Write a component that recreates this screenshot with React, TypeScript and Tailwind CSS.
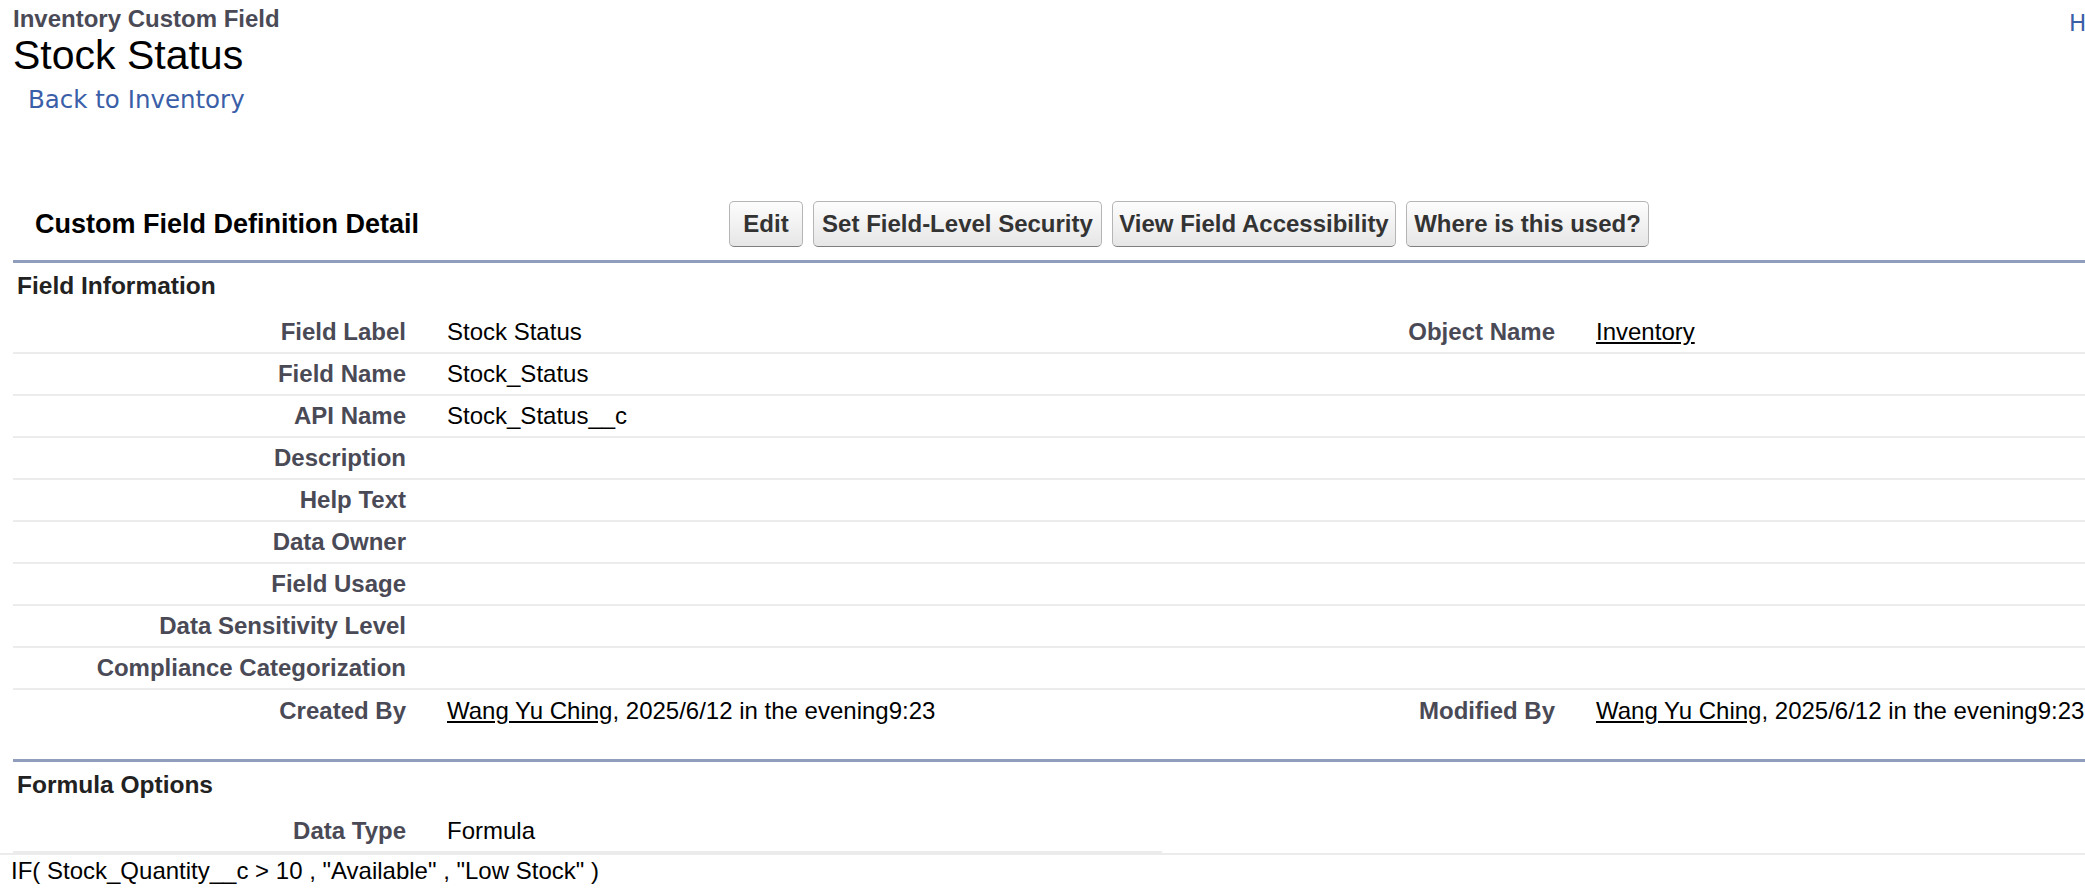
import React from 'react';

const sans = "font-['Liberation_Sans',Arial,sans-serif]";

type Cell = { label?: string; value?: React.ReactNode };

const Modified = () => (
  <>
    <span className="underline">Wang Yu Ching</span>, 2025/6/12 in the evening9:23
  </>
);

const rows: [Cell, Cell][] = [
  [{ label: 'Field Label', value: 'Stock Status' }, { label: 'Object Name', value: <span className="underline">Inventory</span> }],
  [{ label: 'Field Name', value: 'Stock_Status' }, {}],
  [{ label: 'API Name', value: 'Stock_Status__c' }, {}],
  [{ label: 'Description' }, {}],
  [{ label: 'Help Text' }, {}],
  [{ label: 'Data Owner' }, {}],
  [{ label: 'Field Usage' }, {}],
  [{ label: 'Data Sensitivity Level' }, {}],
  [{ label: 'Compliance Categorization' }, {}],
  [{ label: 'Created By', value: <Modified /> }, { label: 'Modified By', value: <Modified /> }],
];

const buttons = [
  { text: 'Edit', w: 'w-[74px]' },
  { text: 'Set Field-Level Security', w: 'w-[289px]' },
  { text: 'View Field Accessibility', w: 'w-[284px]' },
  { text: 'Where is this used?', w: 'w-[243px]' },
];

const LabelCell = ({ text }: { text?: string }) => (
  <div className="pr-[21px] text-right font-bold text-[#4a4a56] whitespace-nowrap">{text}</div>
);

const ValueCell = ({ children }: { children?: React.ReactNode }) => (
  <div className="pl-[20px] text-black whitespace-nowrap overflow-visible">{children}</div>
);

const SectionHeader = ({ title }: { title: string }) => (
  <>
    <div className="h-[3px] bg-[#919dbd]" />
    <h3 className="mt-[9px] pl-[4px] text-[24.5px] leading-[28px] font-bold text-[#222]">{title}</h3>
  </>
);

export default function App() {
  return (
    <div className={`w-full h-[890px] overflow-hidden bg-white ${sans}`}>
      <div className="w-[2400px] pl-[13px] pt-[5px]">
        {/* page title */}
        <div className="flex">
          <div className="w-[2056px] shrink-0">
            <div className="text-[24px] leading-[28px] font-bold text-[#4a4a56]">Inventory Custom Field</div>
            <h1 className="text-[41px] leading-[44px] text-black">Stock Status</h1>
            <div className="mt-[8px] ml-[15px] font-['DejaVu_Sans',Verdana,sans-serif] text-[24.5px] leading-[30px] text-[#3a5ea8]">
              Back to Inventory
            </div>
          </div>
          <div className="mt-[4px] shrink-0 whitespace-nowrap font-['DejaVu_Sans',Verdana,sans-serif] text-[23px] leading-[28px] text-[#3a5ea8]">
            Help for this Page
          </div>
        </div>

        {/* detail block */}
        <div className="mt-[86px] w-[2298px]">
          <div className="flex h-[46px] items-center">
            <div className="w-[716px] shrink-0 pl-[22px] text-[27px] font-bold text-black">Custom Field Definition Detail</div>
            <div className="flex gap-[10px]">
              {buttons.map((b) => (
                <button
                  key={b.text}
                  className={`${b.w} h-[46px] rounded-[5px] border border-[#b5b5b5] border-b-[#7f7f7f] bg-linear-to-b from-[#fdfdfd] to-[#e6e6e6] text-[24px] font-bold text-[#333] whitespace-nowrap`}
                >
                  {b.text}
                </button>
              ))}
            </div>
          </div>

          <div className="mt-[13px]">
            <SectionHeader title="Field Information" />
          </div>

          <div className="mt-[12px] text-[24px]">
            {rows.map(([l, r], i) => (
              <div
                key={i}
                className={`grid h-[42px] grid-cols-[414px_735px_414px_735px] items-center ${
                  i < rows.length - 1 ? 'border-b-2 border-[#ececec]' : ''
                }`}
              >
                <LabelCell text={l.label} />
                <ValueCell>{l.value}</ValueCell>
                <LabelCell text={r.label} />
                <ValueCell>{r.value}</ValueCell>
              </div>
            ))}
          </div>

          <div className="mt-[27px]">
            <SectionHeader title="Formula Options" />
          </div>
        </div>

        <div className="mt-[12px] -ml-[13px] pl-[13px] border-b-2 border-[#ececec] text-[24px]">
          <div className="grid h-[42px] w-[1149px] grid-cols-[414px_735px] items-center border-b-2 border-[#ececec]">
            <LabelCell text="Data Type" />
            <ValueCell>Formula</ValueCell>
          </div>
        </div>

        <div className="mt-[2px] -ml-[2px] text-[24px] leading-[28px] text-black whitespace-nowrap">
          IF( Stock_Quantity__c &gt; 10 , "Available" , "Low Stock" )
        </div>
      </div>
    </div>
  );
}
